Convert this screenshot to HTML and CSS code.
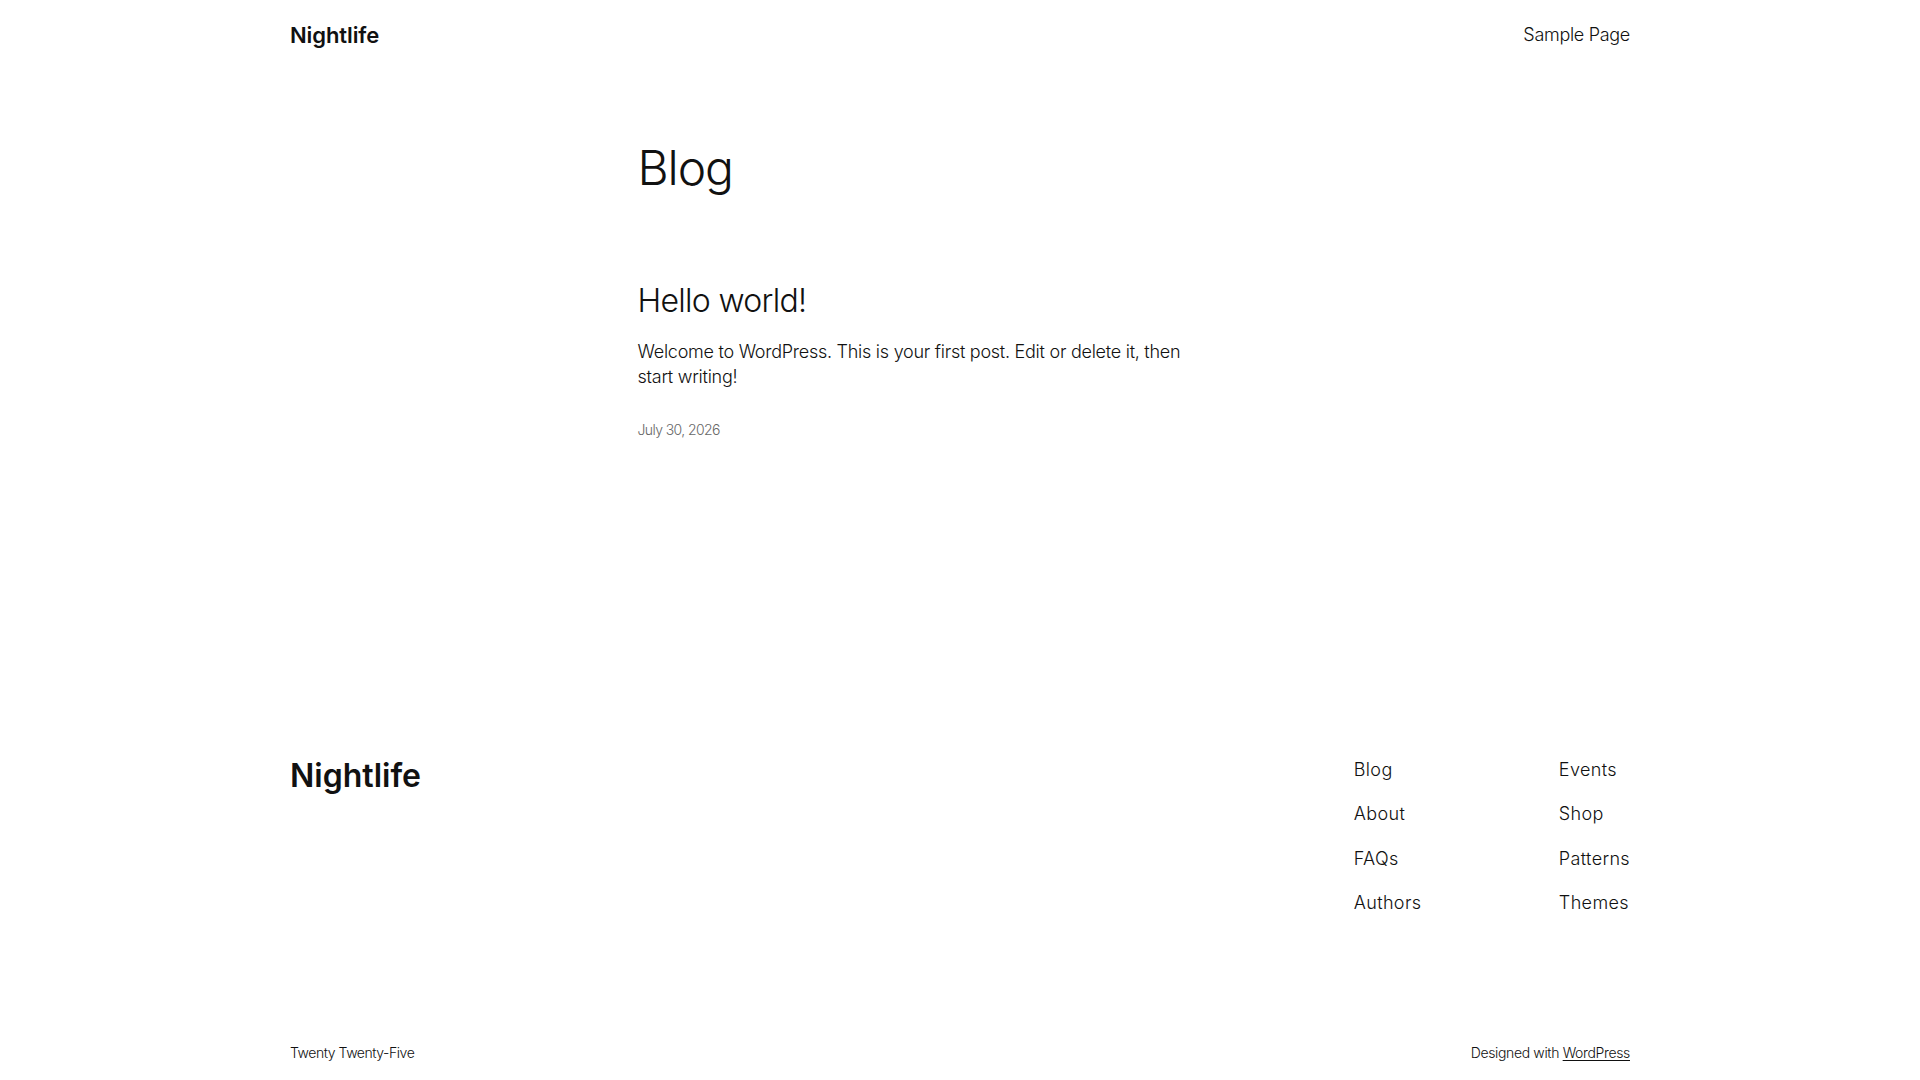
FILE: index.html
```html
<!DOCTYPE html>
<html lang="en">
<head>
<meta charset="utf-8">
<title>Blog – Nightlife</title>
<link rel="stylesheet" href="styles.css">
</head>
<body>
<header class="site-header">
  <div class="wide row">
    <a class="site-title" href="#">Nightlife</a>
    <nav class="top-nav"><a href="#">Sample Page</a></nav>
  </div>
</header>
<main class="site-main">
  <div class="content">
    <h1 class="page-title">Blog</h1>
    <article class="post">
      <h2 class="post-title"><a href="#">Hello world!</a></h2>
      <p class="excerpt">Welcome to WordPress. This is your first post. Edit or delete it, then start writing!</p>
      <div class="post-date">July 30, 2026</div>
    </article>
  </div>
</main>
<footer class="site-footer">
  <div class="wide">
    <div class="footer-top">
      <a class="footer-title" href="#">Nightlife</a>
      <div class="footer-navs">
        <nav class="footer-col">
          <a href="#">Blog</a>
          <a href="#">About</a>
          <a href="#">FAQs</a>
          <a href="#">Authors</a>
        </nav>
        <nav class="footer-col">
          <a href="#">Events</a>
          <a href="#">Shop</a>
          <a href="#">Patterns</a>
          <a href="#">Themes</a>
        </nav>
      </div>
    </div>
    <div class="footer-bottom">
      <p class="credit-left">Twenty Twenty-Five</p>
      <p class="credit-right">Designed with <a href="#">WordPress</a></p>
    </div>
  </div>
</footer>
</body>
</html>
```

FILE: styles.css
```css
html, body {
  margin: 0;
  padding: 0;
  background: #ffffff;
}
body {
  font-family: Inter, "Noto Sans", "Liberation Sans", sans-serif;
  font-weight: 300;
  font-size: 18px;
  line-height: 1.4;
  color: #111111;
  letter-spacing: -0.1px;
}
a {
  color: inherit;
  text-decoration: none;
}
p { margin: 0; }

.wide {
  width: 1340px;
  margin: 0 auto;
}
.row {
  display: flex;
  justify-content: space-between;
  align-items: center;
}

/* Header */
.site-header {
  padding: 21px 0 19px;
}
.site-title {
  font-size: 22px;
  font-weight: 600;
  line-height: 28px;
}
.top-nav a {
  font-size: 18px;
  line-height: 28px;
  letter-spacing: -0.3px;
}

/* Main */
.site-main {
  padding-top: 73px;
  padding-bottom: 317px;
}
.content {
  width: 645px;
  margin: 0 auto;
}
.page-title {
  margin: 0;
  font-size: 48px;
  font-weight: 300;
  line-height: 54px;
  letter-spacing: -1.1px;
}
.post {
  margin-top: 88px;
}
.post-title {
  margin: 0;
  font-size: 32px;
  font-weight: 300;
  line-height: 36px;
  letter-spacing: -0.7px;
}
.excerpt {
  margin-top: 20px;
  width: 565px;
  letter-spacing: -0.26px;
}
.post-date {
  margin-top: 31px;
  font-size: 14px;
  line-height: 19.6px;
  color: #686868;
  letter-spacing: -0.6px;
}

/* Footer */
.footer-top {
  display: flex;
  justify-content: space-between;
  align-items: flex-start;
}
.footer-title {
  font-size: 32px;
  font-weight: 600;
  line-height: 36px;
  margin-top: 1.5px;
  letter-spacing: 0;
}
.footer-navs {
  display: flex;
  gap: 137.5px;
}
.footer-col {
  display: flex;
  flex-direction: column;
  gap: 19.2px;
}
.footer-col a {
  font-size: 18px;
  line-height: 25.2px;
  letter-spacing: 0.35px;
}
.footer-bottom {
  margin-top: 127.5px;
  padding-bottom: 40px;
  display: flex;
  justify-content: space-between;
  font-size: 14px;
  line-height: 19.6px;
}
.credit-left {
  letter-spacing: -0.45px;
}
.credit-right {
  letter-spacing: -0.35px;
}
.footer-bottom a {
  text-decoration: underline;
  text-underline-offset: 2px;
  text-decoration-thickness: 1px;
}
```
